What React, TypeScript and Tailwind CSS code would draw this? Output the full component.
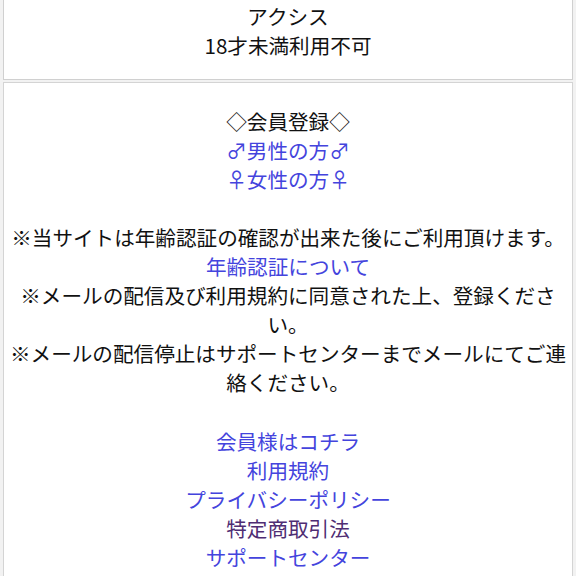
export default function App() {
  const link = 'text-[#4444dd] no-underline'
  return (
    <div
      className="min-h-[576px] w-[576px] overflow-hidden bg-[#f2f2f2] text-[20.6px] leading-[29.05px] text-[#111]"
      style={{ fontFamily: '"Noto Sans CJK JP", "Noto Sans", sans-serif' }}
    >
      <div className="mx-[3px] border-x border-b border-[#d0d0d0] bg-white pt-[2px] pb-[19px] text-center">
        <div>アクシス</div>
        <div>18才未満利用不可</div>
      </div>
      <div className="mx-[3px] mt-[2px] min-h-[500px] border-x border-t border-[#d4d4d4] bg-white px-[4px] pt-[24px] text-center">
        <div>◇会員登録◇</div>
        <div><a className={link} href="#">♂男性の方♂</a></div>
        <div><a className={link} href="#">♀女性の方♀</a></div>
        <div className="h-[29px]" />
        <div>※当サイトは年齢認証の確認が出来た後にご利用頂けます。</div>
        <div><a className={link} href="#">年齢認証について</a></div>
        <div>※メールの配信及び利用規約に同意された上、登録ください。</div>
        <div>※メールの配信停止はサポートセンターまでメールにてご連絡ください。</div>
        <div className="h-[29px]" />
        <div><a className={link} href="#">会員様はコチラ</a></div>
        <div><a className={link} href="#">利用規約</a></div>
        <div><a className={link} href="#">プライバシーポリシー</a></div>
        <div><a className="text-[#4f2d73] no-underline" href="#">特定商取引法</a></div>
        <div><a className={link} href="#">サポートセンター</a></div>
      </div>
    </div>
  )
}
